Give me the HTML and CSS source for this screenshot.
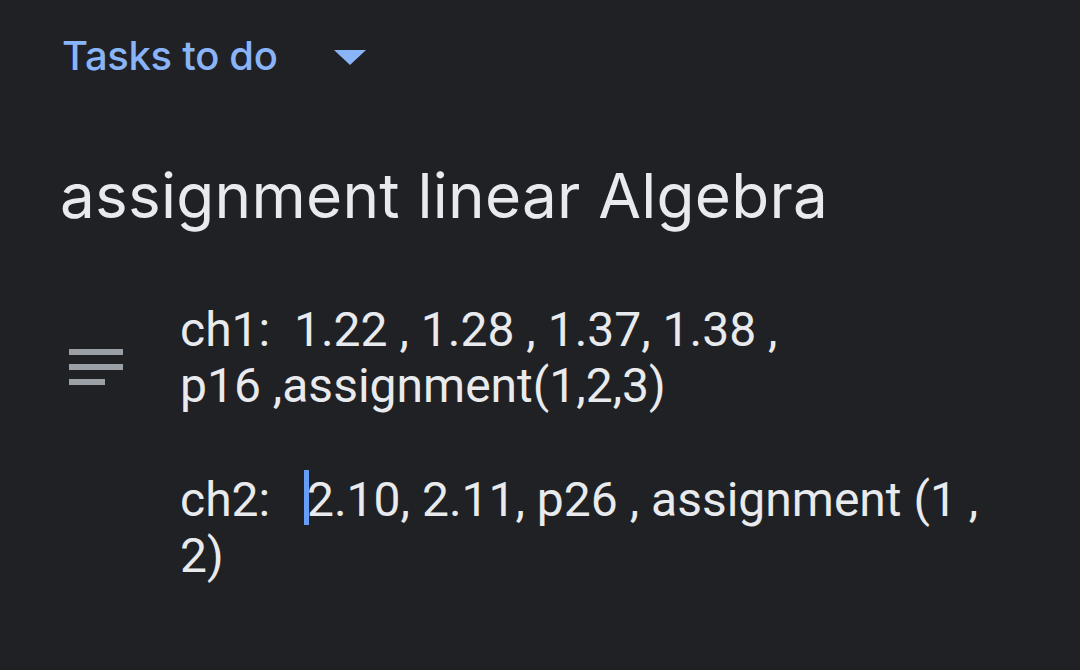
FILE: index.html
```html
<!DOCTYPE html>
<html>
<head>
<meta charset="utf-8">
<link rel="stylesheet" href="styles.css">
</head>
<body>
<div class="page">
  <div class="list-picker">
    <span class="list-name">Tasks to do</span>
    <span class="caret"></span>
  </div>
  <h1 class="title">assignment linear Algebra</h1>
  <div class="details">
    <div class="details-icon">
      <span class="bar"></span>
      <span class="bar"></span>
      <span class="bar short"></span>
    </div>
    <div class="details-text">
      <p class="line">ch1:&nbsp; 1.22 , 1.28 , 1.37, 1.38 ,<br>p16 ,assignment(1,2,3)</p>
      <p class="line blank">&nbsp;</p>
      <p class="line">ch2:&nbsp;&nbsp;<span class="cursor"></span>2.10, 2.11, p26 , assignment (1 ,<br>2)</p>
    </div>
  </div>
</div>
</body>
</html>
```

FILE: styles.css
```css
html, body {
  margin: 0;
  padding: 0;
  background: #202124;
  height: 100%;
}

.page {
  padding: 28px 0 0 62px;
  font-family: Roboto, "Noto Sans", sans-serif;
  color: #e8eaed;
}

.list-picker {
  display: flex;
  align-items: center;
  gap: 56px;
  height: 54px;
}

.list-name {
  font-family: Inter, "Open Sans", sans-serif;
  font-size: 40px;
  font-weight: 500;
  color: #8ab4f8;
  letter-spacing: -0.3px;
}

.caret {
  width: 0;
  height: 0;
  border-left: 16px solid transparent;
  border-right: 16px solid transparent;
  border-top: 15px solid #8ab4f8;
  margin-top: 4px;
}

.title {
  margin: 74px 0 0 -2px;
  font-family: Inter, "Open Sans", sans-serif;
  font-size: 62px;
  font-weight: 400;
  line-height: 80px;
  letter-spacing: 0.25px;
  color: #e8eaed;
}

.details {
  display: flex;
  margin-top: 66px;
}

.details-icon {
  width: 118px;
  padding: 47px 0 0 7px;
  box-sizing: border-box;
  display: flex;
  flex-direction: column;
  gap: 9px;
}

.bar {
  display: block;
  width: 54px;
  height: 6px;
  background: #9aa0a6;
}

.bar.short {
  width: 36px;
}

.details-text {
  font-size: 48px;
  line-height: 56px;
  color: #e8eaed;
}

.line {
  margin: 0;
}

.cursor {
  display: inline-block;
  width: 5px;
  height: 55px;
  background: #669df6;
  vertical-align: -9px;
  margin-left: 10px;
  margin-right: -2px;
}
```
